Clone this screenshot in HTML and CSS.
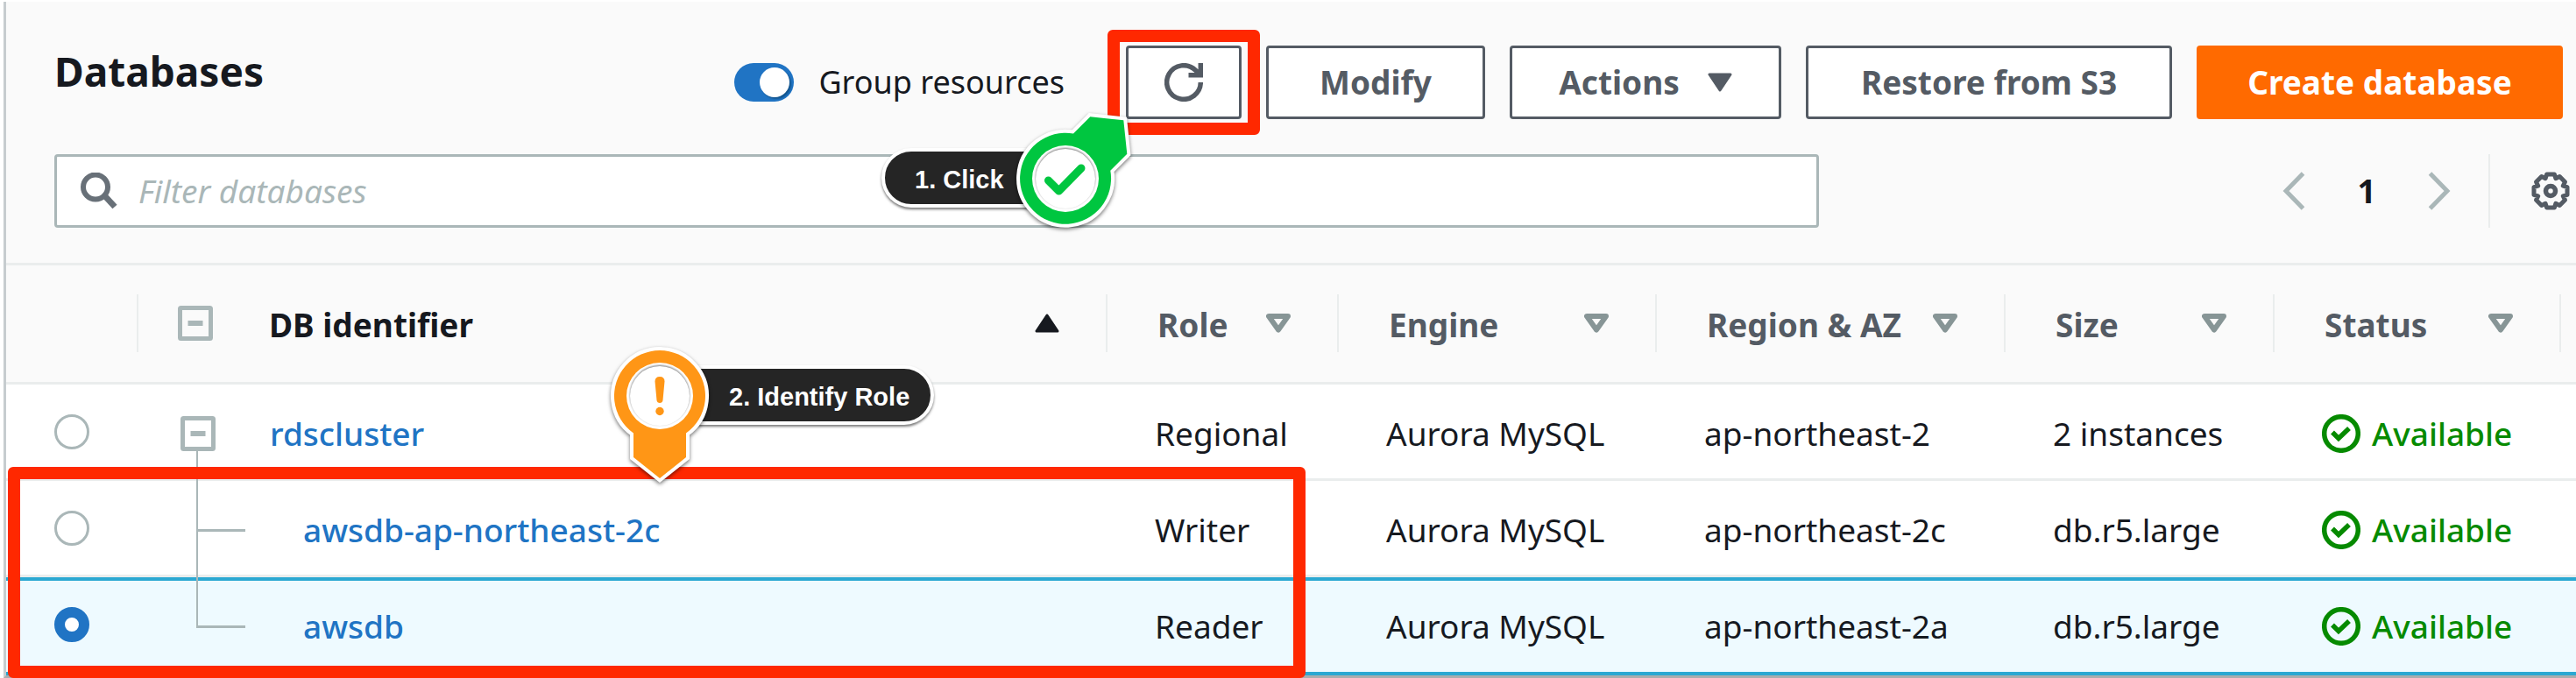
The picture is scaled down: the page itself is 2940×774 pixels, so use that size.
FILE: index.html
```html
<!DOCTYPE html>
<html lang="en">
<head>
<meta charset="utf-8">
<title>Databases</title>
<link rel="stylesheet" href="styles.css">
</head>
<body>
<svg class="sprite" aria-hidden="true">
  <symbol id="sort" viewBox="0 0 28 22"><path d="M3 3H25L14 18.500Z" fill="none" stroke="currentColor" stroke-width="6" stroke-linejoin="round"/></symbol>
  <symbol id="collapse" viewBox="0 0 40 40"><rect x="2.500" y="2.500" width="35" height="35" rx="1" fill="none" stroke="currentColor" stroke-width="5"/><path d="M11.500 20H28.500" stroke="currentColor" stroke-width="6"/></symbol>
  <symbol id="ok" viewBox="0 0 44 44"><circle cx="22" cy="22" r="19.300" fill="none" stroke="currentColor" stroke-width="5.500"/><path d="M12 20.500L19 27.500L31 16" fill="none" stroke="currentColor" stroke-width="5.500"/></symbol>
</svg>
<main class="panel">
  <header class="bar">
    <h1 class="title">Databases</h1>
    <div class="actions">
      <label class="toggle"><input class="switch" type="checkbox" role="switch" checked><span>Group resources</span></label>
      <button class="btn btn-icon" type="button" aria-label="Refresh">
        <svg class="icon" viewBox="0 0 44 44"><path d="M41.300 22A19.300 19.300 0 1 1 35.500 8.200L41 14M41.300 0V13.700H27.500" fill="none" stroke="currentColor" stroke-width="5.500"/></svg>
      </button>
      <button class="btn btn-short" type="button">Modify</button>
      <button class="btn btn-medium" type="button">Actions <svg class="caret" viewBox="0 0 28 22"><path d="M2 2H26L14 20Z" fill="currentColor" stroke="currentColor" stroke-width="3" stroke-linejoin="round"/></svg></button>
      <button class="btn btn-wide" type="button">Restore from S3</button>
      <button class="btn btn-wide btn-primary" type="button">Create database</button>
    </div>
  </header>
  <div class="filter">
    <label class="search">
      <svg class="search-icon" viewBox="0 0 42 42"><circle cx="17" cy="16.500" r="14" fill="none" stroke="currentColor" stroke-width="6"/><path d="M27 26L39 39" stroke="currentColor" stroke-width="7"/></svg>
      <input class="search-input" type="search" placeholder="Filter databases" aria-label="Filter databases">
    </label>
    <nav class="pager" aria-label="Pages">
      <button class="plain muted" type="button" aria-label="Previous page"><svg class="chevron" viewBox="0 0 26 44"><path d="M23.500 2L4 22L23.500 42" fill="none" stroke="currentColor" stroke-width="5"/></svg></button>
      <span class="page">1</span>
      <button class="plain muted" type="button" aria-label="Next page"><svg class="chevron" viewBox="0 0 26 44"><path d="M2.500 2L22 22L2.500 42" fill="none" stroke="currentColor" stroke-width="5"/></svg></button>
      <span class="rule"></span>
      <button class="plain" type="button" aria-label="Preferences"><svg class="icon" viewBox="0 0 44 44"><path d="M41 17.600V26.400L36.300 27.900L38.500 32.300L32.300 38.500L27.900 36.300L26.400 41H17.600L16.100 36.300L11.700 38.500L5.500 32.300L7.700 27.900L3 26.400V17.600L7.700 16.100L5.500 11.700L11.700 5.500L16.100 7.700L17.600 3H26.400L27.900 7.700L32.300 5.500L38.500 11.700L36.300 16.100Z" fill="none" stroke="currentColor" stroke-width="5" stroke-linejoin="round"/><circle cx="22" cy="22" r="5.500" fill="none" stroke="currentColor" stroke-width="5.500"/></svg></button>
    </nav>
  </div>
  <table class="grid">
    <colgroup><col class="c-pick"><col><col class="c-role"><col class="c-engine"><col class="c-region"><col class="c-size"><col class="c-status"><col class="c-rest"></colgroup>
    <thead>
      <tr>
        <th><div class="head"></div></th>
        <th class="sorted"><div class="head head-id"><svg class="box" role="img" aria-label="Collapse all"><use href="#collapse"/></svg><span class="name grow">DB identifier</span><svg class="caret" viewBox="0 0 28 22"><path d="M2 20H26L14 2Z" fill="currentColor" stroke="currentColor" stroke-width="3" stroke-linejoin="round"/></svg></div></th>
        <th><div class="head"><span class="name">Role</span><svg class="caret sort"><use href="#sort"/></svg></div></th>
        <th><div class="head"><span class="name">Engine</span><svg class="caret sort"><use href="#sort"/></svg></div></th>
        <th><div class="head"><span class="name">Region &amp; AZ</span><svg class="caret sort"><use href="#sort"/></svg></div></th>
        <th><div class="head"><span class="name">Size</span><svg class="caret sort"><use href="#sort"/></svg></div></th>
        <th><div class="head"><span class="name">Status</span><svg class="caret sort"><use href="#sort"/></svg></div></th>
        <th></th>
      </tr>
    </thead>
    <tbody>
      <tr>
        <td class="pick"><input class="radio" type="radio" name="db" aria-label="rdscluster"></td>
        <td class="tree"><div class="node"><svg class="box" role="img" aria-label="Collapse"><use href="#collapse"/></svg><a class="link" href="#rdscluster">rdscluster</a></div></td>
        <td>Regional</td><td>Aurora MySQL</td><td>ap-northeast-2</td><td>2 instances</td>
        <td><span class="status"><svg class="icon"><use href="#ok"/></svg>Available</span></td><td></td>
      </tr>
      <tr>
        <td class="pick"><input class="radio" type="radio" name="db" aria-label="awsdb-ap-northeast-2c"></td>
        <td class="tree"><div class="node child"><a class="link" href="#writer">awsdb-ap-northeast-2c</a></div></td>
        <td>Writer</td><td>Aurora MySQL</td><td>ap-northeast-2c</td><td>db.r5.large</td>
        <td><span class="status"><svg class="icon"><use href="#ok"/></svg>Available</span></td><td></td>
      </tr>
      <tr class="selected">
        <td class="pick"><input class="radio" type="radio" name="db" aria-label="awsdb" checked></td>
        <td class="tree"><div class="node child last"><a class="link" href="#awsdb">awsdb</a></div></td>
        <td>Reader</td><td>Aurora MySQL</td><td>ap-northeast-2a</td><td>db.r5.large</td>
        <td><span class="status"><svg class="icon"><use href="#ok"/></svg>Available</span></td><td></td>
      </tr>
    </tbody>
  </table>
</main>
<div class="mark mark-refresh"></div>
<div class="mark mark-rows"></div>
<div class="note note-click">1. Click</div>
<div class="note note-role">2. Identify Role</div>
<svg class="pin pin-click" viewBox="0 0 140 150">
  <path d="M75 23.500L94.300 4.300L132.300 8.300L136.300 46.700L117.300 65.700A52 52 0 1 1 75 23.500Z" fill="#00c640" stroke="#fff" stroke-width="8" paint-order="stroke"/>
  <circle cx="66" cy="75" r="38" fill="#fff"/><circle class="well" cx="66" cy="75" r="34"/><path d="M46.500 77L58.500 89L84 63" fill="none" stroke="#00c640" stroke-width="9" stroke-linecap="round" stroke-linejoin="round"/>
</svg>
<svg class="pin pin-role" viewBox="0 0 120 160">
  <path d="M30 101.500A52 52 0 1 1 90 101.500V129L60 153L30 129Z" fill="#ff9616" stroke="#fff" stroke-width="8" paint-order="stroke"/>
  <circle cx="60" cy="59" r="38" fill="#fff"/><circle class="well" cx="60" cy="59" r="34"/><path d="M54.500 42.500Q54.500 37 60 37T65.500 42.500L63.500 64Q63 67 60 67T56.500 64Z" fill="#ff9616"/><circle cx="60" cy="76.500" r="4.700" fill="#ff9616"/>
</svg>
</body>
</html>
```
FILE: styles.css
```css
* { box-sizing: border-box; }
body { margin: 0; padding: 2px 0 0 4px; position: relative; background: #fff; color: #16191f; font: 37px/48px "Noto Sans", "Open Sans", sans-serif; overflow: hidden; }
button, input { font: inherit; color: inherit; margin: 0; }
svg { display: block; flex: none; }
.sprite { position: absolute; width: 0; height: 0; }
.panel { border-left: 3px solid #c6cccf; border-bottom: 3px solid #a9adae; background: #fafafa; }
.bar { display: flex; justify-content: space-between; align-items: flex-start; padding: 50px 15px 40px 55px; }
.title { margin: 0; font-size: 46px; line-height: 58px; font-weight: 700; }
.actions { display: flex; align-items: center; gap: 28px; }
.toggle { display: flex; align-items: center; gap: 28px; margin-right: 42px; font-size: 36px; }
.switch { appearance: none; width: 68px; height: 44px; padding: 5px; border-radius: 22px; background: #2074c4; display: flex; justify-content: flex-end; }
.switch::before { content: ""; width: 34px; height: 34px; border-radius: 50%; background: #fff; box-shadow: 2px 2px 2px #14568f; }
.btn { display: flex; align-items: center; justify-content: center; gap: 32px; height: 84px; padding: 0 20px; border: 3px solid #545b64; border-radius: 4px; background: #fff; color: #545b64; font-weight: 700; white-space: nowrap; }
.btn-icon { width: 132px; }
.btn-short { width: 250px; }
.btn-medium { width: 310px; }
.btn-wide { width: 418px; }
.btn-primary { background: #ff6a00; border-color: #ff6a00; color: #fff; }
.icon { width: 44px; height: 44px; }
.caret { width: 28px; height: 22px; }
.filter { display: grid; grid-template-columns: minmax(0, 2014px) auto; justify-content: space-between; padding: 0 7px 40px 55px; }
.search { display: flex; align-items: center; gap: 24px; height: 84px; padding: 0 27px; border: 3px solid #aab7b8; border-radius: 4px; background: #fff; }
.search-icon { width: 42px; height: 42px; color: #687078; }
.search-input { flex: 1; min-width: 0; padding: 0; border: 0; outline: 0; background: none; }
.search-input::placeholder { color: #aab7b8; font-style: italic; opacity: 1; }
.pager { display: flex; align-items: center; }
.plain { padding: 0; border: 0; background: none; color: #545b64; }
.muted { color: #aab7b8; }
.chevron { width: 26px; height: 44px; }
.page { width: 140px; text-align: center; font-weight: 700; }
.rule { width: 2px; height: 84px; margin: 0 47px 0 43px; background: #eaeded; }
.grid { width: 100%; table-layout: fixed; border-collapse: separate; border-spacing: 0; border-top: 3px solid #eaeded; background: #fff; }
.c-pick { width: 151px; } .c-role { width: 264px; } .c-engine { width: 363px; } .c-region { width: 398px; }
.c-size { width: 307px; } .c-status { width: 327px; } .c-rest { width: 17px; }
th { padding: 33px 0 34px; border-bottom: 3px solid #eaeded; background: #fafafa; color: #545b64; text-align: left; font-weight: 700; }
.sorted { color: #16191f; }
.head { display: flex; align-items: center; justify-content: space-between; height: 66px; padding: 0 53px 0 57px; border-right: 2px solid #eaeded; white-space: nowrap; }
.head-id { padding-left: 45px; gap: 64px; }
.name { padding-top: 4px; }
.grow { flex: 1; }
.sort { color: #879596; }
.box { width: 40px; height: 40px; color: #aab7b8; }
td { height: 110px; padding: 4px 0 0 54px; border-bottom: 3px solid #eaeded; white-space: nowrap; }
.pick { padding: 0 0 0 55px; }
.radio { appearance: none; display: block; width: 40px; height: 40px; border: 3px solid #aab7b8; border-radius: 50%; background: #fff; }
.radio:checked { border: 12px solid #2074c4; }
.tree { padding-left: 48px; }
.node { position: relative; display: flex; align-items: center; gap: 62px; }
.child { padding-left: 140px; }
.child::before, .child::after { content: ""; position: absolute; background: #aab7b8; }
.child::before { left: 18px; bottom: 23px; width: 2px; height: 91px; }
.child::after { left: 18px; top: 23px; width: 56px; height: 3px; }
.last::before { height: 114px; }
.link { color: #2074c4; font-weight: 500; text-decoration: none; }
.status { display: flex; align-items: center; gap: 13px; color: #068a00; font-weight: 500; }
.selected td { height: 112px; padding-top: 0; background: #eefaff; border-top: 4px solid #2ba8d2; border-bottom: 4px solid #2ba8d2; }
.selected .pick { padding-bottom: 4px; }
.mark { position: absolute; border: 14px solid #ff2800; border-radius: 6px; }
.mark-refresh { left: 1264px; top: 34px; width: 174px; height: 120px; }
.mark-rows { left: 9px; top: 533px; width: 1481px; height: 241px; }
.note { position: absolute; height: 68px; border: 4px solid #fff; border-radius: 34px; background: #252525; color: #fff; font: 700 29px/64px "Liberation Sans", Arial, sans-serif; white-space: nowrap; box-shadow: 0 2px 3px #0008; }
.note-click { left: 1006px; top: 169px; padding: 0 60px 0 34px; }
.note-role { left: 760px; top: 417px; padding: 0 24px 0 68px; }
.pin { position: absolute; overflow: visible; filter: drop-shadow(0 2px 2px #0008); }
.pin-click { left: 1150px; top: 129px; width: 140px; height: 150px; }
.pin-role { left: 693px; top: 393px; width: 120px; height: 160px; }
.well { fill: #fff; filter: drop-shadow(0 -1px 1px #0008); }
```
